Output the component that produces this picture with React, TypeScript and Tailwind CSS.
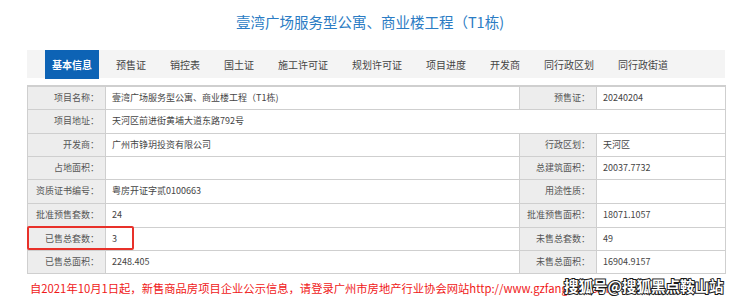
const FONT = "font-['Microsoft_YaHei','Noto_Sans_CJK_SC','Noto_Sans',sans-serif]";

const tabs = ['基本信息', '预售证', '销控表', '国土证', '施工许可证', '规划许可证', '项目进度', '开发商', '同行政区划', '同行政街道'];

type Row = { h: string; l1: string; v1: string; l2?: string; v2?: string; full?: boolean };

const rows: Row[] = [
  { h: 'h-[23px]', l1: '项目名称：', v1: '壹湾广场服务型公寓、商业楼工程（T1栋)', l2: '预售证：', v2: '20240204' },
  { h: 'h-[24px]', l1: '项目地址：', v1: '天河区前进街黄埔大道东路792号', full: true },
  { h: 'h-[23px]', l1: '开发商：', v1: '广州市铮玥投资有限公司', l2: '行政区划：', v2: '天河区' },
  { h: 'h-[23px]', l1: '占地面积：', v1: '', l2: '总建筑面积：', v2: '20037.7732' },
  { h: 'h-[24px]', l1: '资质证书编号：', v1: '粤房开证字贰0100663', l2: '用途性质：', v2: '' },
  { h: 'h-[24px]', l1: '批准预售套数：', v1: '24', l2: '批准预售面积：', v2: '18071.1057' },
  { h: 'h-[23px]', l1: '已售总套数：', v1: '3', l2: '未售总套数：', v2: '49' },
  { h: 'h-[23px]', l1: '已售总面积：', v1: '2248.405', l2: '未售总面积：', v2: '16904.9157' },
];

const labelCls = 'bg-[#ededed] border border-[#cfcfcf] text-right pr-[6px] text-[#555] whitespace-nowrap';
const valueCls = 'bg-white border border-[#cfcfcf] text-left pl-[6px] text-[#444] whitespace-nowrap';

export default function App() {
  return (
    <div className={`w-[740px] h-[299px] bg-white overflow-hidden ${FONT}`}>
      {/* title */}
      <div className="h-[45px] pt-[12px] text-center text-[14.5px] leading-[20px] text-[#2b7cc4]">
        壹湾广场服务型公寓、商业楼工程（T1栋)
      </div>

      <div className="ml-[27px] w-[698px] relative">
        {/* tab bar */}
        <div className="flex items-stretch h-[28px] bg-[#f4f4f4] pl-[18px] gap-[10px] mt-[5px]">
          {tabs.map((t, i) => (
            <div
              key={t}
              className={
                i === 0
                  ? 'h-[29px] px-[7px] flex items-center bg-[#0d63b5] text-white font-bold text-[10px]'
                  : 'px-[7px] flex items-center text-[#444] text-[10px]'
              }
            >
              {t}
            </div>
          ))}
        </div>

        {/* info table */}
        <table className="mt-[7px] w-[698px] table-fixed border-collapse border-t-2 border-[#cfcfcf] text-[9px]">
          <colgroup>
            <col className="w-[78px]" />
            <col className="w-[414px]" />
            <col className="w-[77px]" />
            <col className="w-[129px]" />
          </colgroup>
          <tbody>
            {rows.map((r) => (
              <tr key={r.l1} className={r.h}>
                <td className={labelCls}>{r.l1}</td>
                {r.full ? (
                  <td className={valueCls} colSpan={3}>{r.v1}</td>
                ) : (
                  <>
                    <td className={valueCls}>{r.v1}</td>
                    <td className={labelCls}>{r.l2}</td>
                    <td className={valueCls}>{r.v2}</td>
                  </>
                )}
              </tr>
            ))}
          </tbody>
        </table>

        {/* highlight box */}
        <div className="absolute left-0 top-[176px] w-[107px] h-[24px] border-2 border-[#e8312a] rounded-[2px]" />

        <div className="mt-[7px] pl-[3px] text-[11.3px] leading-[14px] text-[#f01818] whitespace-nowrap">
          自2021年10月1日起，新售商品房项目企业公示信息，请登录广州市房地产行业协会网站http://www.gzfangxie.com
        </div>

        {/* watermark */}
        <div className="absolute left-[537px] top-[227px] text-[14.5px] font-bold leading-[18px] text-white whitespace-nowrap [-webkit-text-stroke:2px_#1a1a1a] [paint-order:stroke_fill]">
          搜狐号@搜狐黑点鞍山站
        </div>
      </div>
    </div>
  );
}
